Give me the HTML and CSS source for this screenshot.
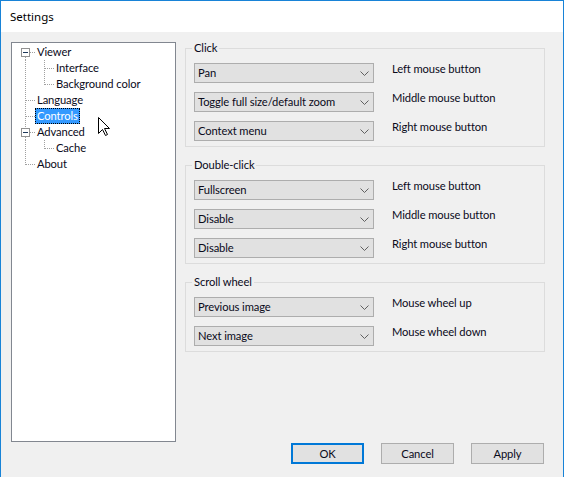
FILE: index.html
```html
<!DOCTYPE html>
<html>
<head>
<meta charset="utf-8">
<link rel="stylesheet" href="styles.css">
</head>
<body>
<div class="window">
  <div class="titlebar">Settings</div>
  <div class="content">
    <div class="tree">
      <div class="tree-row">
        <svg class="gutter g0" width="23" height="16"><line x1="13.5" y1="13" x2="13.5" y2="16" class="dot"/><line x1="18" y1="8.5" x2="23" y2="8.5" class="dot"/><rect x="9.5" y="4.5" width="8" height="8" class="exp"/><line x1="11" y1="8.5" x2="16" y2="8.5" class="minus"/></svg>
        <span class="label">Viewer</span>
      </div>
      <div class="tree-row">
        <svg class="gutter g1" width="42" height="16"><line x1="13.5" y1="0" x2="13.5" y2="16" class="dot"/><line x1="32.5" y1="0" x2="32.5" y2="16" class="dot"/><line x1="33" y1="8.5" x2="42" y2="8.5" class="dot"/></svg>
        <span class="label">Interface</span>
      </div>
      <div class="tree-row">
        <svg class="gutter g1" width="42" height="16"><line x1="13.5" y1="0" x2="13.5" y2="16" class="dot"/><line x1="32.5" y1="0" x2="32.5" y2="9" class="dot"/><line x1="33" y1="8.5" x2="42" y2="8.5" class="dot"/></svg>
        <span class="label">Background color</span>
      </div>
      <div class="tree-row">
        <svg class="gutter g0" width="23" height="16"><line x1="13.5" y1="0" x2="13.5" y2="16" class="dot"/><line x1="14" y1="8.5" x2="23" y2="8.5" class="dot"/></svg>
        <span class="label">Language</span>
      </div>
      <div class="tree-row">
        <svg class="gutter g0" width="23" height="16"><line x1="13.5" y1="0" x2="13.5" y2="16" class="dot"/><line x1="14" y1="8.5" x2="23" y2="8.5" class="dot"/></svg>
        <span class="label selected">Controls</span>
      </div>
      <div class="tree-row">
        <svg class="gutter g0" width="23" height="16"><line x1="13.5" y1="0" x2="13.5" y2="4" class="dot"/><line x1="13.5" y1="13" x2="13.5" y2="16" class="dot"/><line x1="18" y1="8.5" x2="23" y2="8.5" class="dot"/><rect x="9.5" y="4.5" width="8" height="8" class="exp"/><line x1="11" y1="8.5" x2="16" y2="8.5" class="minus"/></svg>
        <span class="label">Advanced</span>
      </div>
      <div class="tree-row">
        <svg class="gutter g1" width="42" height="16"><line x1="13.5" y1="0" x2="13.5" y2="16" class="dot"/><line x1="32.5" y1="0" x2="32.5" y2="9" class="dot"/><line x1="33" y1="8.5" x2="42" y2="8.5" class="dot"/></svg>
        <span class="label">Cache</span>
      </div>
      <div class="tree-row">
        <svg class="gutter g0" width="23" height="16"><line x1="13.5" y1="0" x2="13.5" y2="9" class="dot"/><line x1="14" y1="8.5" x2="23" y2="8.5" class="dot"/></svg>
        <span class="label">About</span>
      </div>
    </div>

    <div class="panel">
      <fieldset class="group">
        <legend>Click</legend>
        <div class="row"><div class="combo"><span>Pan</span><svg class="chev" width="9" height="5"><polyline points="0.5,0.5 4.5,4.5 8.5,0.5"/></svg></div><span class="desc">Left mouse button</span></div>
        <div class="row"><div class="combo"><span>Toggle full size/default zoom</span><svg class="chev" width="9" height="5"><polyline points="0.5,0.5 4.5,4.5 8.5,0.5"/></svg></div><span class="desc">Middle mouse button</span></div>
        <div class="row"><div class="combo"><span>Context menu</span><svg class="chev" width="9" height="5"><polyline points="0.5,0.5 4.5,4.5 8.5,0.5"/></svg></div><span class="desc">Right mouse button</span></div>
      </fieldset>
      <fieldset class="group">
        <legend>Double-click</legend>
        <div class="row"><div class="combo"><span>Fullscreen</span><svg class="chev" width="9" height="5"><polyline points="0.5,0.5 4.5,4.5 8.5,0.5"/></svg></div><span class="desc">Left mouse button</span></div>
        <div class="row"><div class="combo"><span>Disable</span><svg class="chev" width="9" height="5"><polyline points="0.5,0.5 4.5,4.5 8.5,0.5"/></svg></div><span class="desc">Middle mouse button</span></div>
        <div class="row"><div class="combo"><span>Disable</span><svg class="chev" width="9" height="5"><polyline points="0.5,0.5 4.5,4.5 8.5,0.5"/></svg></div><span class="desc">Right mouse button</span></div>
      </fieldset>
      <fieldset class="group">
        <legend>Scroll wheel</legend>
        <div class="row"><div class="combo"><span>Previous image</span><svg class="chev" width="9" height="5"><polyline points="0.5,0.5 4.5,4.5 8.5,0.5"/></svg></div><span class="desc">Mouse wheel up</span></div>
        <div class="row"><div class="combo"><span>Next image</span><svg class="chev" width="9" height="5"><polyline points="0.5,0.5 4.5,4.5 8.5,0.5"/></svg></div><span class="desc">Mouse wheel down</span></div>
      </fieldset>
      <div class="buttons">
        <div class="btn default">OK</div>
        <div class="btn">Cancel</div>
        <div class="btn">Apply</div>
      </div>
    </div>
  </div>
  <svg class="cursor" width="13" height="20" viewBox="0 0 13 20"><path d="M0.5 0.5 V16.5 L4.5 12.5 L7.5 18.5 L9.5 17.5 L6.5 11.5 H11.5 Z" fill="#fff" stroke="#000" stroke-width="1" stroke-linejoin="miter"/></svg>
</div>
</body>
</html>
```
FILE: styles.css
```css
html, body {
  margin: 0;
  padding: 0;
  background: #ffffff;
  overflow: hidden;
}
body {
  font-family: Lato, "Noto Sans", sans-serif;
  font-size: 11.2px;
  letter-spacing: -0.1px;
  color: #0a0a1a;
}
.window {
  position: relative;
  width: 564px;
  height: 500px;
  box-sizing: border-box;
  border: 1px solid #1883d7;
  border-bottom: none;
  background: #f0f0f0;
  overflow: hidden;
}
.titlebar {
  height: 31px;
  line-height: 31px;
  background: #fff;
  padding-left: 9px;
  font-family: "Noto Sans", sans-serif;
  font-size: 11.5px;
  letter-spacing: 0;
  color: #000;
}
.content {
  display: flex;
  align-items: flex-start;
  gap: 9px;
  padding: 8px 0 0 10px;
}
.tree {
  width: 165px;
  height: 400px;
  margin-top: 2px;
  box-sizing: border-box;
  border: 1px solid #828790;
  background: #fff;
  padding-top: 1px;
}
.tree-row {
  display: flex;
  height: 16px;
  align-items: flex-start;
}
.gutter { display: block; flex: none; }
.dot {
  stroke: #a0a0a0;
  stroke-width: 1;
  stroke-dasharray: 1 1;
}
.exp {
  fill: #fff;
  stroke: #919191;
}
.minus {
  stroke: #1e395b;
  stroke-width: 1;
}
.label {
  display: block;
  line-height: 14px;
  height: 14px;
  padding: 0 1px;
  border: 1px dotted transparent;
  white-space: nowrap;
}
.label.selected {
  background: #3399ff;
  color: #fff;
  border-color: #000;
}
.panel {
  width: 360px;
  height: 424px;
  display: flex;
  flex-direction: column;
}
.group {
  margin: 0 0 10px 0;
  padding: 7px 8px 5px 8px;
  border: 1px solid #dcdcdc;
  display: flex;
  flex-direction: column;
  gap: 9px;
  min-width: 0;
}
.group legend {
  padding: 0 2px;
  margin-left: -2px;
  line-height: 16px;
}
.row {
  display: flex;
  align-items: flex-start;
  gap: 18px;
}
.combo {
  width: 180px;
  height: 20px;
  box-sizing: border-box;
  border: 1px solid #adadad;
  background: #e1e1e1;
  display: flex;
  align-items: center;
  justify-content: space-between;
  padding: 0 4px 0 3px;
}
.combo span { line-height: 18px; white-space: nowrap; }
.chev {
  display: block;
  flex: none;
  fill: none;
  stroke: #606060;
  stroke-width: 1;
}
.desc {
  line-height: 16px;
  margin-top: -2px;
  white-space: nowrap;
}
.buttons {
  margin-top: auto;
  display: flex;
  justify-content: flex-end;
  gap: 17px;
  padding-right: 1px;
}
.btn {
  width: 73px;
  height: 21px;
  box-sizing: border-box;
  border: 1px solid #adadad;
  background: #e1e1e1;
  text-align: center;
  line-height: 19px;
}
.btn.default {
  border: 2px solid #0078d7;
  line-height: 17px;
}
.cursor {
  position: absolute;
  left: 97px;
  top: 116px;
}
```
